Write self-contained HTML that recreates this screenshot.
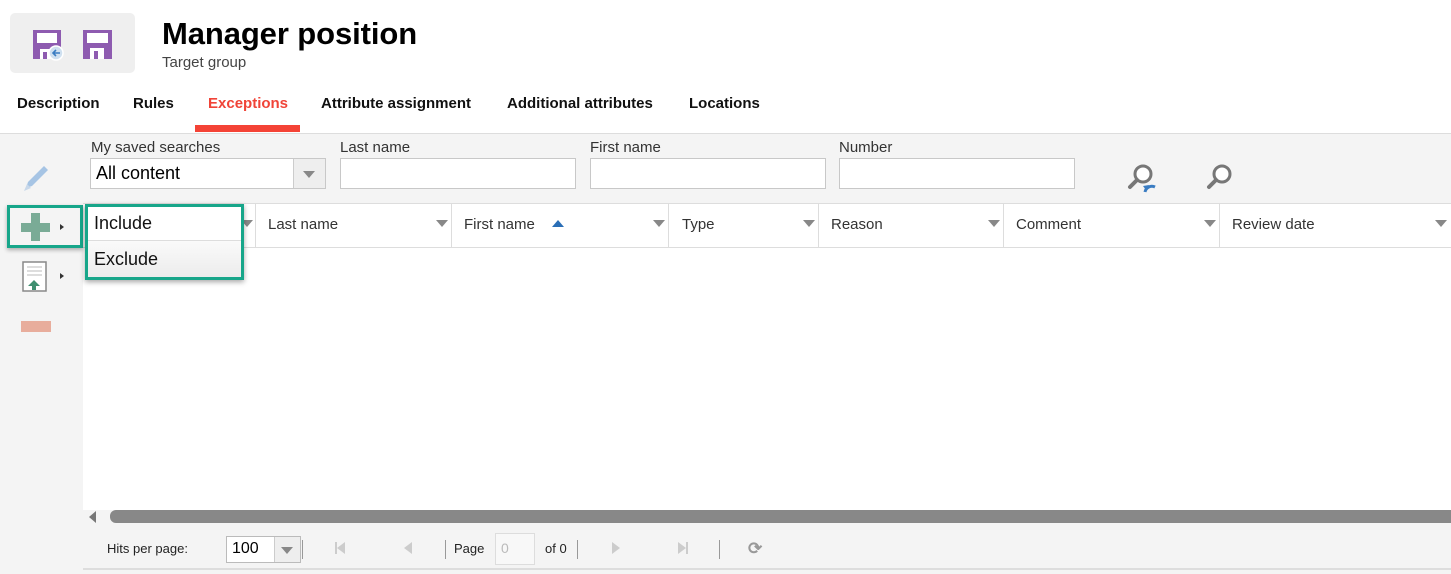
<!DOCTYPE html>
<html><head><style>
*{box-sizing:border-box;margin:0;padding:0}
body{width:1451px;height:574px;overflow:hidden;font-family:"Liberation Sans",Arial,sans-serif;background:#fff;position:relative}
.a{position:absolute}
.tab{position:absolute;top:95px;font-size:15px;font-weight:bold;color:#111}
.lbl{position:absolute;top:139px;font-size:15px;color:#333}
.inp{position:absolute;top:158px;height:31px;width:236px;background:#fff;border:1px solid #c8c8c8}
.hd{position:absolute;top:216px;font-size:15px;color:#333}
.arr{position:absolute;top:220px;width:0;height:0;border-left:6px solid transparent;border-right:6px solid transparent;border-top:7px solid #888}
.sep{position:absolute;top:204px;height:43px;width:1px;background:#ddd}
.pg{position:absolute;font-size:13px;color:#222;top:541px}
.vs{position:absolute;top:540px;height:19px;width:1px;background:#999}
</style></head><body>
<div class="a" style="left:10px;top:13px;width:125px;height:60px;background:#efefef;border-radius:5px"></div>
<svg class="a" style="left:32px;top:29px" width="34" height="32" viewBox="0 0 34 32"><rect x="1" y="1" width="28" height="29" fill="#8e5bb0"/><rect x="5" y="4" width="20" height="10" fill="#fff"/><rect x="8" y="20" width="12" height="10" fill="#fff"/><rect x="11" y="23" width="4" height="7" fill="#8e5bb0"/><circle cx="24" cy="24" r="7" fill="#cfe0f0" stroke="#fff" stroke-width="1.5"/><path d="M28 24h-7m3-3l-3 3 3 3" stroke="#3a7cc2" stroke-width="1.6" fill="none"/></svg>
<svg class="a" style="left:82px;top:29px" width="32" height="32" viewBox="0 0 32 32"><rect x="1" y="1" width="29" height="29" fill="#8e5bb0"/><rect x="5" y="4" width="21" height="10" fill="#fff"/><rect x="8" y="19" width="14" height="11" fill="#fff"/><rect x="12" y="22" width="4" height="8" fill="#8e5bb0"/></svg>
<div class="a" style="left:162px;top:16px;font-size:31px;font-weight:bold;color:#000;letter-spacing:-0.1px">Manager position</div>
<div class="a" style="left:162px;top:54px;font-size:15px;color:#444">Target group</div>
<div class="tab" style="left:17px">Description</div>
<div class="tab" style="left:133px">Rules</div>
<div class="tab" style="left:208px;color:#f04438">Exceptions</div>
<div class="tab" style="left:321px">Attribute assignment</div>
<div class="tab" style="left:507px">Additional attributes</div>
<div class="tab" style="left:689px">Locations</div>
<div class="a" style="left:195px;top:125px;width:105px;height:7px;background:#f44336"></div>
<div class="a" style="left:0;top:133px;width:1451px;height:441px;background:#f4f4f4;border-top:1px solid #ddd"></div>
<svg class="a" style="left:22px;top:162px" width="28" height="30" viewBox="0 0 28 30"><path d="M4 26l2-6L22 4l4 4L10 24z" fill="#a6c4e4"/><path d="M2 29l3-7 4 4z" fill="#c8d8ea"/></svg>
<div class="lbl" style="left:91px">My saved searches</div>
<div class="lbl" style="left:340px">Last name</div>
<div class="lbl" style="left:590px">First name</div>
<div class="lbl" style="left:839px">Number</div>
<div class="inp" style="left:90px;width:236px"><span style="position:absolute;left:5px;top:4px;font-size:18px;color:#000">All content</span><div style="position:absolute;right:0;top:0;width:32px;height:29px;background:#eee;border-left:1px solid #ccc"></div><div class="arr" style="right:10px;top:12px"></div></div>
<div class="inp" style="left:340px"></div>
<div class="inp" style="left:590px"></div>
<div class="inp" style="left:839px"></div>
<svg class="a" style="left:1126px;top:162px" width="36" height="32" viewBox="0 0 36 32"><circle cx="17" cy="12" r="8" fill="#fff" stroke="#777" stroke-width="3"/><path d="M11 18l-7 7" stroke="#777" stroke-width="4" stroke-linecap="round"/><path d="M19 30a7 7 0 0 1 10-5" stroke="#3a7cc2" stroke-width="3" fill="none"/><path d="M17 24l3 4 3-5z" fill="#3a7cc2"/></svg>
<svg class="a" style="left:1204px;top:162px" width="32" height="32" viewBox="0 0 32 32"><circle cx="18" cy="12" r="8" fill="#fff" stroke="#777" stroke-width="3"/><path d="M12 18l-7 7" stroke="#777" stroke-width="4" stroke-linecap="round"/></svg>
<div class="a" style="left:83px;top:203px;width:1368px;height:307px;background:#fff;border-top:1px solid #ddd"></div>
<div class="a" style="left:83px;top:247px;width:1368px;height:1px;background:#ddd"></div>
<div class="sep" style="left:255px"></div><div class="sep" style="left:451px"></div><div class="sep" style="left:668px"></div><div class="sep" style="left:818px"></div><div class="sep" style="left:1003px"></div><div class="sep" style="left:1219px"></div>
<div class="arr" style="left:241px"></div><div class="arr" style="left:436px"></div><div class="arr" style="left:653px"></div><div class="arr" style="left:803px"></div><div class="arr" style="left:988px"></div><div class="arr" style="left:1204px"></div><div class="arr" style="left:1435px"></div>
<div class="hd" style="left:268px">Last name</div>
<div class="hd" style="left:464px">First name</div>
<div class="a" style="left:552px;top:220px;border-left:6px solid transparent;border-right:6px solid transparent;border-bottom:7px solid #2a6eb6;width:0;height:0"></div>
<div class="hd" style="left:682px">Type</div>
<div class="hd" style="left:831px">Reason</div>
<div class="hd" style="left:1016px">Comment</div>
<div class="hd" style="left:1232px">Review date</div>
<div class="a" style="left:7px;top:205px;width:76px;height:43px;border:3px solid #17a68a;box-shadow:0 2px 4px rgba(0,0,0,.3);background:#f4f4f4"></div>
<svg class="a" style="left:20px;top:212px" width="32" height="30" viewBox="0 0 32 30"><path d="M11 1h9v10h10v9H20v9h-9v-9H1v-9h10z" fill="#7aab96"/></svg>
<div class="a" style="left:60px;top:224px;border-top:3px solid transparent;border-bottom:3px solid transparent;border-left:4px solid #333"></div>
<svg class="a" style="left:22px;top:261px" width="26" height="32" viewBox="0 0 26 32"><rect x="1" y="1" width="23" height="29" fill="#fff" stroke="#888" stroke-width="1.5"/><path d="M5 6h15M5 10h15M5 14h15" stroke="#bbb"/><path d="M12 19l-6 6h4v4h4v-4h4z" fill="#3f8f70"/></svg>
<div class="a" style="left:60px;top:273px;border-top:3px solid transparent;border-bottom:3px solid transparent;border-left:4px solid #333"></div>
<div class="a" style="left:21px;top:321px;width:30px;height:11px;background:#e8ad9c"></div>
<div class="a" style="left:85px;top:204px;width:159px;height:76px;border:3px solid #17a68a;background:#fff;box-shadow:0 2px 5px rgba(0,0,0,.35)">
<div style="position:absolute;left:6px;top:6px;font-size:18px;color:#111">Include</div>
<div style="position:absolute;left:0;top:33px;width:153px;height:37px;background:linear-gradient(#fafafa,#ececec);border-top:1px solid #ddd"></div>
<div style="position:absolute;left:6px;top:42px;font-size:18px;color:#111">Exclude</div></div>
<div class="a" style="left:89px;top:511px;border-top:6px solid transparent;border-bottom:6px solid transparent;border-right:7px solid #777"></div>
<div class="a" style="left:110px;top:510px;width:1341px;height:13px;background:#888;border-radius:6px 0 0 6px"></div>
<div class="a" style="left:83px;top:526px;width:1368px;height:44px;background:#f4f4f4;border-bottom:2px solid #ddd"></div>
<div class="pg" style="left:107px">Hits per page:</div>
<div class="a" style="left:226px;top:536px;width:75px;height:27px;background:#fff;border:1px solid #bbb"><span style="position:absolute;left:5px;top:3px;font-size:16px">100</span><div style="position:absolute;right:0;top:0;width:26px;height:25px;background:#eee;border-left:1px solid #ccc"></div><div class="arr" style="right:7px;top:10px"></div></div>
<div class="vs" style="left:302px"></div><div class="vs" style="left:445px"></div><div class="vs" style="left:577px"></div><div class="vs" style="left:719px"></div>
<div class="a" style="left:335px;top:542px;width:2px;height:12px;background:#ccc"></div><div class="a" style="left:337px;top:542px;border-top:6px solid transparent;border-bottom:6px solid transparent;border-right:8px solid #ccc"></div>
<div class="a" style="left:404px;top:542px;border-top:6px solid transparent;border-bottom:6px solid transparent;border-right:8px solid #ccc"></div>
<div class="pg" style="left:454px">Page</div>
<div class="a" style="left:495px;top:533px;width:40px;height:32px;background:#f8f8f8;border:1px solid #ddd"><span style="position:absolute;left:5px;top:6px;font-size:14px;color:#bbb">0</span></div>
<div class="pg" style="left:545px">of 0</div>
<div class="a" style="left:612px;top:542px;border-top:6px solid transparent;border-bottom:6px solid transparent;border-left:8px solid #ccc"></div>
<div class="a" style="left:678px;top:542px;border-top:6px solid transparent;border-bottom:6px solid transparent;border-left:8px solid #ccc"></div><div class="a" style="left:686px;top:542px;width:2px;height:12px;background:#ccc"></div>
<div class="a" style="left:748px;top:539px;font-size:17px;color:#999;font-weight:bold">⟳</div>
</body></html>
